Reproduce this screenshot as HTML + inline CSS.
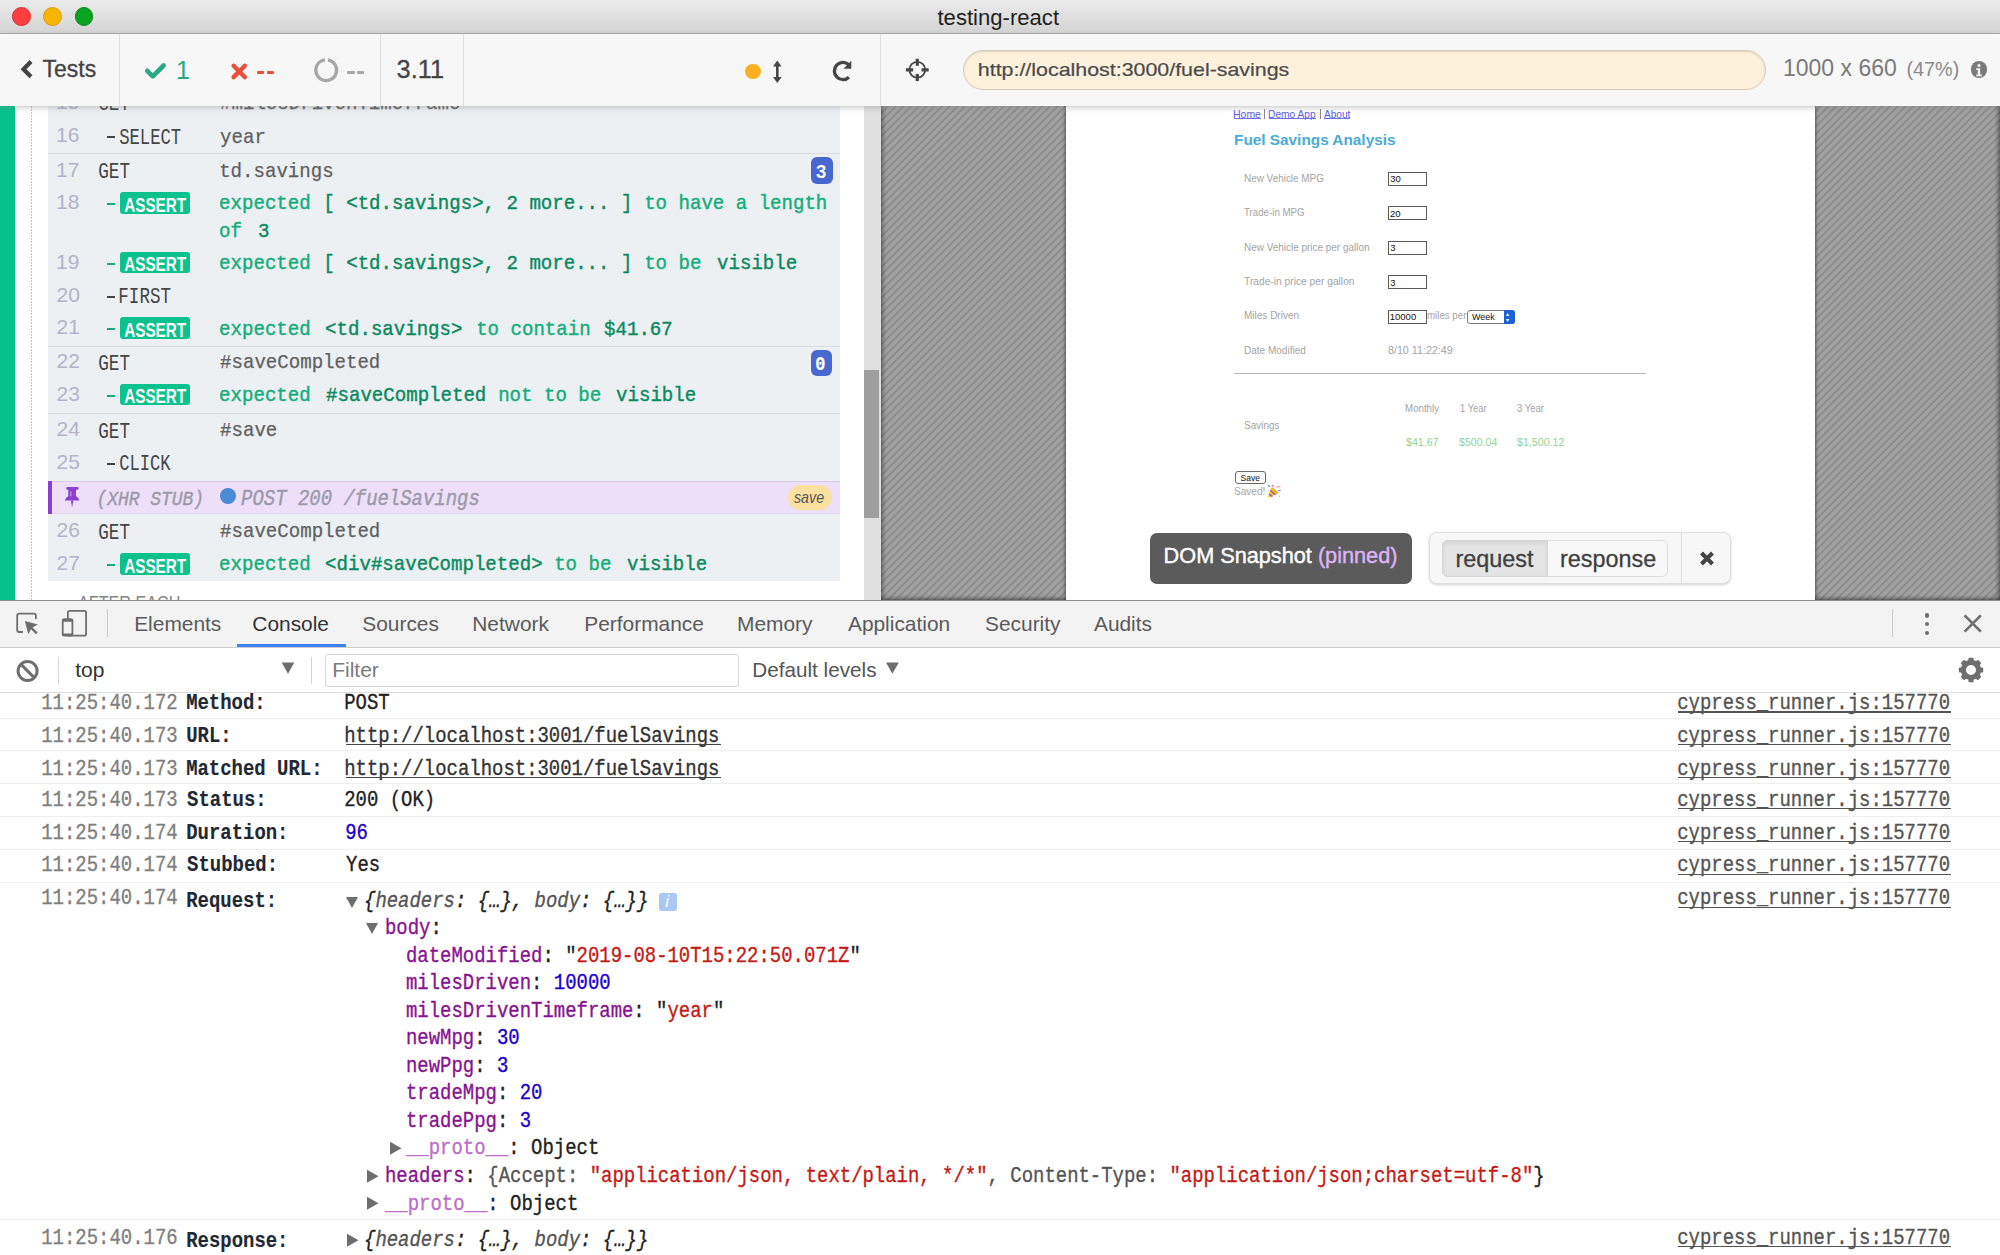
<!DOCTYPE html>
<html><head><meta charset="utf-8"><title>testing-react</title>
<style>
html,body{margin:0;padding:0;width:2000px;height:1255px;overflow:hidden;background:#fff}
.t{position:absolute;white-space:pre}
.r{position:absolute;box-sizing:border-box}
svg.r{overflow:visible}
</style></head><body>

<div class="r" style="left:0px;top:100px;width:881px;height:500px;background:#fff"></div>
<div class="r" style="left:0px;top:100px;width:15px;height:500px;background:#05c28b"></div>
<div class="r" style="left:31px;top:100px;width:1.2px;height:500px;background:repeating-linear-gradient(#c4c4c4 0px,#c4c4c4 2px,transparent 2px,transparent 3px)"></div>
<div class="r" style="left:48px;top:100px;width:792px;height:481px;background:#edf0f3"></div>
<div class="r" style="left:48px;top:153px;width:792px;height:1px;background:#d9dde2"></div>
<div class="r" style="left:48px;top:346px;width:792px;height:1px;background:#d9dde2"></div>
<div class="r" style="left:48px;top:413px;width:792px;height:1px;background:#d9dde2"></div>
<div class="r" style="left:48px;top:481px;width:792px;height:33px;background:#ecdff7;border-top:1px solid #d9cbe6;border-bottom:1px solid #e3d8ee"></div>
<div class="r" style="left:48px;top:481px;width:3.5px;height:33px;background:#8b3fd6"></div>
<div class="r" style="left:864px;top:106px;width:17px;height:494px;background:#e0e0e0"></div>
<div class="r" style="left:864px;top:370px;width:15px;height:148px;background:#9e9e9e"></div>
<div class="t" style="left:56.00px;top:89.80px;font:normal 400 21.00px/23px 'Liberation Sans',sans-serif;color:#b5b3c8;">15</div>
<div class="t" style="left:97.83px;top:92.20px;font:normal 400 21.20px/24px 'Liberation Mono',monospace;color:#454545;transform:scaleX(0.8343);transform-origin:1.17px 0;">GET</div>
<div class="t" style="left:219.96px;top:91.80px;font:normal 400 20.60px/23px 'Liberation Mono',monospace;color:#606060;transform:scaleX(0.9264);transform-origin:0.54px 0;-webkit-text-stroke:0.25px #606060">#milesDrivenTimeframe</div>
<div class="t" style="left:56.00px;top:123.00px;font:normal 400 21.00px/23px 'Liberation Sans',sans-serif;color:#b5b3c8;">16</div>
<div class="r" style="left:107.2px;top:136.4px;width:7.6px;height:2px;background:#454545"></div>
<div class="t" style="left:119.18px;top:125.60px;font:normal 400 21.20px/24px 'Liberation Mono',monospace;color:#454545;transform:scaleX(0.8124);transform-origin:0.82px 0;">SELECT</div>
<div class="t" style="left:219.84px;top:125.50px;font:normal 400 20.60px/23px 'Liberation Mono',monospace;color:#606060;transform:scaleX(0.9264);transform-origin:0.66px 0;-webkit-text-stroke:0.25px #606060">year</div>
<div class="t" style="left:56.00px;top:157.50px;font:normal 400 21.00px/23px 'Liberation Sans',sans-serif;color:#b5b3c8;">17</div>
<div class="t" style="left:97.83px;top:160.10px;font:normal 400 21.20px/24px 'Liberation Mono',monospace;color:#454545;transform:scaleX(0.8343);transform-origin:1.17px 0;">GET</div>
<div class="t" style="left:218.59px;top:159.50px;font:normal 400 20.60px/23px 'Liberation Mono',monospace;color:#606060;transform:scaleX(0.9264);transform-origin:1.91px 0;-webkit-text-stroke:0.25px #606060">td.savings</div>
<div class="r" style="left:810.8px;top:157.2px;width:21.8px;height:26.8px;background:#4867cf;border-radius:6px"></div>
<div class="t" style="left:816.08px;top:160.50px;font:normal 700 18.50px/21px 'Liberation Sans',sans-serif;color:#fff;">3</div>
<div class="t" style="left:56.00px;top:190.00px;font:normal 400 21.00px/23px 'Liberation Sans',sans-serif;color:#b5b3c8;">18</div>
<div class="r" style="left:107.2px;top:203.4px;width:7.6px;height:2px;background:#14ad7b"></div>
<div class="r" style="left:120px;top:192px;width:70px;height:21.7px;background:#0bc28d;border-radius:3px"></div>
<div class="t" style="left:123.99px;top:192.70px;font:normal 700 20.50px/23px 'Liberation Sans',sans-serif;color:#fff;transform:scaleX(0.7462);transform-origin:0.51px 0;">ASSERT</div>
<div class="t" style="left:219.16px;top:192.00px;font:normal 400 20.60px/23px 'Liberation Mono',monospace;color:#14ad7b;transform:scaleX(0.9264);transform-origin:1.34px 0;-webkit-text-stroke:0.42px #14ad7b">expected</div>
<div class="t" style="left:323.38px;top:192.00px;font:normal 400 20.60px/23px 'Liberation Mono',monospace;color:#0b8a60;transform:scaleX(0.9264);transform-origin:4.12px 0;-webkit-text-stroke:0.42px #0b8a60">[ &lt;td.savings&gt;, 2 more... ]</div>
<div class="t" style="left:644.39px;top:192.00px;font:normal 400 20.60px/23px 'Liberation Mono',monospace;color:#14ad7b;transform:scaleX(0.9264);transform-origin:1.91px 0;-webkit-text-stroke:0.42px #14ad7b">to have a length</div>
<div class="t" style="left:219.09px;top:219.50px;font:normal 400 20.60px/23px 'Liberation Mono',monospace;color:#14ad7b;transform:scaleX(0.9264);transform-origin:1.31px 0;-webkit-text-stroke:0.42px #14ad7b">of</div>
<div class="t" style="left:257.51px;top:219.50px;font:normal 400 20.60px/23px 'Liberation Mono',monospace;color:#0b8a60;transform:scaleX(0.9264);transform-origin:1.29px 0;-webkit-text-stroke:0.42px #0b8a60">3</div>
<div class="t" style="left:56.00px;top:249.70px;font:normal 400 21.00px/23px 'Liberation Sans',sans-serif;color:#b5b3c8;">19</div>
<div class="r" style="left:107.2px;top:263.09999999999997px;width:7.6px;height:2px;background:#14ad7b"></div>
<div class="r" style="left:120px;top:251.7px;width:70px;height:21.7px;background:#0bc28d;border-radius:3px"></div>
<div class="t" style="left:123.99px;top:252.40px;font:normal 700 20.50px/23px 'Liberation Sans',sans-serif;color:#fff;transform:scaleX(0.7462);transform-origin:0.51px 0;">ASSERT</div>
<div class="t" style="left:219.16px;top:251.70px;font:normal 400 20.60px/23px 'Liberation Mono',monospace;color:#14ad7b;transform:scaleX(0.9264);transform-origin:1.34px 0;-webkit-text-stroke:0.42px #14ad7b">expected</div>
<div class="t" style="left:323.38px;top:251.70px;font:normal 400 20.60px/23px 'Liberation Mono',monospace;color:#0b8a60;transform:scaleX(0.9264);transform-origin:4.12px 0;-webkit-text-stroke:0.42px #0b8a60">[ &lt;td.savings&gt;, 2 more... ]</div>
<div class="t" style="left:644.39px;top:251.70px;font:normal 400 20.60px/23px 'Liberation Mono',monospace;color:#14ad7b;transform:scaleX(0.9264);transform-origin:1.91px 0;-webkit-text-stroke:0.42px #14ad7b">to be</div>
<div class="t" style="left:717.01px;top:251.70px;font:normal 400 20.60px/23px 'Liberation Mono',monospace;color:#0b8a60;transform:scaleX(0.9264);transform-origin:0.69px 0;-webkit-text-stroke:0.42px #0b8a60">visible</div>
<div class="t" style="left:56.54px;top:282.70px;font:normal 400 21.00px/23px 'Liberation Sans',sans-serif;color:#b5b3c8;">20</div>
<div class="r" style="left:107.2px;top:296.09999999999997px;width:7.6px;height:2px;background:#454545"></div>
<div class="t" style="left:117.99px;top:285.30px;font:normal 400 21.20px/24px 'Liberation Mono',monospace;color:#454545;transform:scaleX(0.8272);transform-origin:2.01px 0;">FIRST</div>
<div class="t" style="left:56.54px;top:315.00px;font:normal 400 21.00px/23px 'Liberation Sans',sans-serif;color:#b5b3c8;">21</div>
<div class="r" style="left:107.2px;top:328.4px;width:7.6px;height:2px;background:#14ad7b"></div>
<div class="r" style="left:120px;top:317px;width:70px;height:21.7px;background:#0bc28d;border-radius:3px"></div>
<div class="t" style="left:123.99px;top:317.70px;font:normal 700 20.50px/23px 'Liberation Sans',sans-serif;color:#fff;transform:scaleX(0.7462);transform-origin:0.51px 0;">ASSERT</div>
<div class="t" style="left:219.16px;top:317.50px;font:normal 400 20.60px/23px 'Liberation Mono',monospace;color:#14ad7b;transform:scaleX(0.9264);transform-origin:1.34px 0;-webkit-text-stroke:0.42px #14ad7b">expected</div>
<div class="t" style="left:325.13px;top:317.50px;font:normal 400 20.60px/23px 'Liberation Mono',monospace;color:#0b8a60;transform:scaleX(0.9264);transform-origin:1.17px 0;-webkit-text-stroke:0.42px #0b8a60">&lt;td.savings&gt;</div>
<div class="t" style="left:475.59px;top:317.50px;font:normal 400 20.60px/23px 'Liberation Mono',monospace;color:#14ad7b;transform:scaleX(0.9264);transform-origin:1.91px 0;-webkit-text-stroke:0.42px #14ad7b">to contain</div>
<div class="t" style="left:604.34px;top:317.50px;font:normal 400 20.60px/23px 'Liberation Mono',monospace;color:#0b8a60;transform:scaleX(0.9264);transform-origin:0.66px 0;-webkit-text-stroke:0.42px #0b8a60">$41.67</div>
<div class="t" style="left:56.54px;top:349.40px;font:normal 400 21.00px/23px 'Liberation Sans',sans-serif;color:#b5b3c8;">22</div>
<div class="t" style="left:97.83px;top:352.00px;font:normal 400 21.20px/24px 'Liberation Mono',monospace;color:#454545;transform:scaleX(0.8343);transform-origin:1.17px 0;">GET</div>
<div class="t" style="left:219.96px;top:351.40px;font:normal 400 20.60px/23px 'Liberation Mono',monospace;color:#606060;transform:scaleX(0.9264);transform-origin:0.54px 0;-webkit-text-stroke:0.25px #606060">#saveCompleted</div>
<div class="r" style="left:810.8px;top:350px;width:21.7px;height:26.3px;background:#4867cf;border-radius:6px"></div>
<div class="t" style="left:814.90px;top:354.00px;font:normal 700 19.33px/22px 'Liberation Mono',monospace;color:#fff;transform:scaleX(0.8773);transform-origin:1.10px 0;-webkit-text-stroke-width:0.2px">0</div>
<div class="t" style="left:56.54px;top:381.70px;font:normal 400 21.00px/23px 'Liberation Sans',sans-serif;color:#b5b3c8;">23</div>
<div class="r" style="left:107.2px;top:395.09999999999997px;width:7.6px;height:2px;background:#14ad7b"></div>
<div class="r" style="left:120px;top:383.7px;width:70px;height:21.7px;background:#0bc28d;border-radius:3px"></div>
<div class="t" style="left:123.99px;top:384.40px;font:normal 700 20.50px/23px 'Liberation Sans',sans-serif;color:#fff;transform:scaleX(0.7462);transform-origin:0.51px 0;">ASSERT</div>
<div class="t" style="left:219.16px;top:384.00px;font:normal 400 20.60px/23px 'Liberation Mono',monospace;color:#14ad7b;transform:scaleX(0.9264);transform-origin:1.34px 0;-webkit-text-stroke:0.42px #14ad7b">expected</div>
<div class="t" style="left:325.76px;top:384.00px;font:normal 400 20.60px/23px 'Liberation Mono',monospace;color:#0b8a60;transform:scaleX(0.9264);transform-origin:0.54px 0;-webkit-text-stroke:0.42px #0b8a60">#saveCompleted</div>
<div class="t" style="left:498.20px;top:384.00px;font:normal 400 20.60px/23px 'Liberation Mono',monospace;color:#14ad7b;transform:scaleX(0.9264);transform-origin:1.80px 0;-webkit-text-stroke:0.42px #14ad7b">not to be</div>
<div class="t" style="left:615.61px;top:384.00px;font:normal 400 20.60px/23px 'Liberation Mono',monospace;color:#0b8a60;transform:scaleX(0.9264);transform-origin:0.69px 0;-webkit-text-stroke:0.42px #0b8a60">visible</div>
<div class="t" style="left:56.54px;top:417.00px;font:normal 400 21.00px/23px 'Liberation Sans',sans-serif;color:#b5b3c8;">24</div>
<div class="t" style="left:97.83px;top:419.60px;font:normal 400 21.20px/24px 'Liberation Mono',monospace;color:#454545;transform:scaleX(0.8343);transform-origin:1.17px 0;">GET</div>
<div class="t" style="left:219.96px;top:418.50px;font:normal 400 20.60px/23px 'Liberation Mono',monospace;color:#606060;transform:scaleX(0.9264);transform-origin:0.54px 0;-webkit-text-stroke:0.25px #606060">#save</div>
<div class="t" style="left:56.54px;top:449.60px;font:normal 400 21.00px/23px 'Liberation Sans',sans-serif;color:#b5b3c8;">25</div>
<div class="r" style="left:107.2px;top:463.0px;width:7.6px;height:2px;background:#454545"></div>
<div class="t" style="left:118.83px;top:452.20px;font:normal 400 21.20px/24px 'Liberation Mono',monospace;color:#454545;transform:scaleX(0.8090);transform-origin:1.17px 0;">CLICK</div>
<svg class="r" style="left:60px;top:484px;" width="24" height="26" viewBox="60 484 24 26"><path d="M67.6 487.1h9.7a1.3 1.3 0 0 1 0 2.6h-1.3v6.6c1.7 0.8 3 2.4 3.3 4.3h-14.3c0.3-1.9 1.6-3.5 3.3-4.3v-6.6h-0.7a1.3 1.3 0 0 1 0-2.6z" fill="#8b3fd2"/><path d="M70.9 500.4h2.4l-1.2 6.9z" fill="#8b3fd2"/><rect x="70.2" y="491.3" width="1.2" height="5" fill="#c6a0e8"/></svg>
<div class="t" style="left:96.23px;top:488.40px;font:italic 400 21.00px/23px 'Liberation Mono',monospace;color:#9b9aa8;transform:scaleX(0.8534);transform-origin:3.17px 0;-webkit-text-stroke:0.4px #9b9aa8">(XHR STUB)</div>
<div class="r" style="left:220px;top:487.9px;width:16px;height:16px;background:#4a8ad4;border-radius:50%"></div>
<div class="t" style="left:241.40px;top:487.00px;font:italic 400 21.60px/24px 'Liberation Mono',monospace;color:#9b9aa8;transform:scaleX(0.8773);transform-origin:0.60px 0;-webkit-text-stroke:0.4px #9b9aa8">POST 200 /fuelSavings</div>
<div class="r" style="left:787.5px;top:484.5px;width:44.5px;height:25.5px;background:#fae19f;border-radius:13px"></div>
<div class="t" style="left:794.46px;top:488.00px;font:italic 400 17.00px/19px 'Liberation Sans',sans-serif;color:#555;transform:scaleX(0.8372);transform-origin:0.04px 0;">save</div>
<div class="t" style="left:56.54px;top:518.20px;font:normal 400 21.00px/23px 'Liberation Sans',sans-serif;color:#b5b3c8;">26</div>
<div class="t" style="left:97.83px;top:520.80px;font:normal 400 21.20px/24px 'Liberation Mono',monospace;color:#454545;transform:scaleX(0.8343);transform-origin:1.17px 0;">GET</div>
<div class="t" style="left:219.96px;top:520.00px;font:normal 400 20.60px/23px 'Liberation Mono',monospace;color:#606060;transform:scaleX(0.9264);transform-origin:0.54px 0;-webkit-text-stroke:0.25px #606060">#saveCompleted</div>
<div class="t" style="left:56.54px;top:550.90px;font:normal 400 21.00px/23px 'Liberation Sans',sans-serif;color:#b5b3c8;">27</div>
<div class="r" style="left:107.2px;top:564.3px;width:7.6px;height:2px;background:#14ad7b"></div>
<div class="r" style="left:120px;top:552.9px;width:70px;height:21.7px;background:#0bc28d;border-radius:3px"></div>
<div class="t" style="left:123.99px;top:553.60px;font:normal 700 20.50px/23px 'Liberation Sans',sans-serif;color:#fff;transform:scaleX(0.7462);transform-origin:0.51px 0;">ASSERT</div>
<div class="t" style="left:219.16px;top:553.00px;font:normal 400 20.60px/23px 'Liberation Mono',monospace;color:#14ad7b;transform:scaleX(0.9264);transform-origin:1.34px 0;-webkit-text-stroke:0.42px #14ad7b">expected</div>
<div class="t" style="left:325.13px;top:553.00px;font:normal 400 20.60px/23px 'Liberation Mono',monospace;color:#0b8a60;transform:scaleX(0.9264);transform-origin:1.17px 0;-webkit-text-stroke:0.42px #0b8a60">&lt;div#saveCompleted&gt;</div>
<div class="t" style="left:554.39px;top:553.00px;font:normal 400 20.60px/23px 'Liberation Mono',monospace;color:#14ad7b;transform:scaleX(0.9264);transform-origin:1.91px 0;-webkit-text-stroke:0.42px #14ad7b">to be</div>
<div class="t" style="left:626.81px;top:553.00px;font:normal 400 20.60px/23px 'Liberation Mono',monospace;color:#0b8a60;transform:scaleX(0.9264);transform-origin:0.69px 0;-webkit-text-stroke:0.42px #0b8a60">visible</div>
<div class="t" style="left:77.96px;top:593.00px;font:normal 400 18.00px/20px 'Liberation Sans',sans-serif;color:#858585;transform:scaleX(0.8977);transform-origin:0.04px 0;">AFTER EACH</div>
<div class="r" style="left:881px;top:100px;width:1119px;height:500px;box-shadow:inset 3px 0 4px -1px rgba(0,0,0,.35),inset -3px 0 4px -1px rgba(0,0,0,.35),inset 0 -3px 4px -1px rgba(0,0,0,.3);background-color:#a1a1a1;background-image:repeating-linear-gradient(135deg,#a1a1a1 0px,#a1a1a1 2.6px,#898989 3.8px,#898989 4.2px,#a1a1a1 5.45px)"></div>
<div class="r" style="left:1066px;top:100px;width:749px;height:500px;background:#fff;box-shadow:0 0 3px 1px rgba(0,0,0,.45)"></div>
<div class="t" style="left:1233.36px;top:106.70px;font:normal 400 11.50px/14px 'Liberation Sans',sans-serif;color:#5b5be6;transform:scaleX(0.9069);transform-origin:0.94px 0;">Home</div>
<div class="r" style="left:1234.3px;top:118.3px;width:26.5px;height:0.8px;background:#7070ea"></div>
<div class="t" style="left:1268.26px;top:106.70px;font:normal 400 11.50px/14px 'Liberation Sans',sans-serif;color:#5b5be6;transform:scaleX(0.8846);transform-origin:0.94px 0;">Demo App</div>
<div class="r" style="left:1269.2px;top:118.3px;width:46.799999999999955px;height:0.8px;background:#7070ea"></div>
<div class="t" style="left:1324.18px;top:106.70px;font:normal 400 11.50px/14px 'Liberation Sans',sans-serif;color:#5b5be6;transform:scaleX(0.8782);transform-origin:0.02px 0;">About</div>
<div class="r" style="left:1324.2px;top:118.3px;width:26.299999999999955px;height:0.8px;background:#7070ea"></div>
<div class="r" style="left:1264.2px;top:109px;width:0.9px;height:10px;background:#888"></div>
<div class="r" style="left:1319.7px;top:109px;width:0.9px;height:10px;background:#888"></div>
<div class="t" style="left:1233.97px;top:131.20px;font:normal 700 15.40px/18px 'Liberation Sans',sans-serif;color:#4aabd7;transform:scaleX(0.9972);transform-origin:1.03px 0;">Fuel Savings Analysis</div>
<div class="t" style="left:1243.74px;top:172.00px;font:normal 400 10.50px/13px 'Liberation Sans',sans-serif;color:#a4a4a4;transform:scaleX(0.9432);transform-origin:0.86px 0;">New Vehicle MPG</div>
<div class="t" style="left:1244.36px;top:206.35px;font:normal 400 10.50px/13px 'Liberation Sans',sans-serif;color:#a4a4a4;transform:scaleX(0.9243);transform-origin:0.24px 0;">Trade-in MPG</div>
<div class="t" style="left:1243.74px;top:240.70px;font:normal 400 10.50px/13px 'Liberation Sans',sans-serif;color:#a4a4a4;transform:scaleX(0.9466);transform-origin:0.86px 0;">New Vehicle price per gallon</div>
<div class="t" style="left:1244.36px;top:275.05px;font:normal 400 10.50px/13px 'Liberation Sans',sans-serif;color:#a4a4a4;transform:scaleX(0.9744);transform-origin:0.24px 0;">Trade-in price per gallon</div>
<div class="t" style="left:1243.74px;top:309.40px;font:normal 400 10.50px/13px 'Liberation Sans',sans-serif;color:#a4a4a4;transform:scaleX(0.9517);transform-origin:0.86px 0;">Miles Driven</div>
<div class="t" style="left:1243.74px;top:343.75px;font:normal 400 10.50px/13px 'Liberation Sans',sans-serif;color:#a4a4a4;transform:scaleX(0.9534);transform-origin:0.86px 0;">Date Modified</div>
<div class="r" style="left:1388px;top:171.7px;width:39px;height:14.3px;background:#fff;border:1px solid #5a5a5a"></div>
<div class="t" style="left:1390.14px;top:173.20px;font:normal 400 9.50px/12px 'Liberation Sans',sans-serif;color:#111;">30</div>
<div class="r" style="left:1388px;top:206.14999999999998px;width:39px;height:14.3px;background:#fff;border:1px solid #5a5a5a"></div>
<div class="t" style="left:1390.02px;top:207.65px;font:normal 400 9.50px/12px 'Liberation Sans',sans-serif;color:#111;">20</div>
<div class="r" style="left:1388px;top:240.6px;width:39px;height:14.3px;background:#fff;border:1px solid #5a5a5a"></div>
<div class="t" style="left:1390.14px;top:242.10px;font:normal 400 9.50px/12px 'Liberation Sans',sans-serif;color:#111;">3</div>
<div class="r" style="left:1388px;top:275.05px;width:39px;height:14.3px;background:#fff;border:1px solid #5a5a5a"></div>
<div class="t" style="left:1390.14px;top:276.55px;font:normal 400 9.50px/12px 'Liberation Sans',sans-serif;color:#111;">3</div>
<div class="r" style="left:1388px;top:309.5px;width:39px;height:14.3px;background:#fff;border:1px solid #5a5a5a"></div>
<div class="t" style="left:1389.78px;top:311.00px;font:normal 400 9.50px/12px 'Liberation Sans',sans-serif;color:#111;">10000</div>
<div class="t" style="left:1426.80px;top:309.30px;font:normal 400 10.50px/13px 'Liberation Sans',sans-serif;color:#a4a4a4;transform:scaleX(0.9227);transform-origin:0.70px 0;">miles per</div>
<div class="r" style="left:1467px;top:310px;width:48.3px;height:13.8px;background:#fff;border:1px solid #7a7a7a;border-radius:3px"></div>
<div class="r" style="left:1503.8px;top:310px;width:11.5px;height:13.8px;background:#1c62d4;border-radius:0 3px 3px 0"></div>
<div class="t" style="left:1471.96px;top:312.00px;font:normal 400 9.00px/11px 'Liberation Sans',sans-serif;color:#111;">Week</div>
<div class="t" style="left:1506.40px;top:310.00px;font:normal 400 6.00px/8px 'Liberation Sans',sans-serif;color:#fff;">▴</div>
<div class="t" style="left:1506.40px;top:316.00px;font:normal 400 6.00px/8px 'Liberation Sans',sans-serif;color:#fff;">▾</div>
<div class="t" style="left:1387.84px;top:344.10px;font:normal 400 10.50px/13px 'Liberation Sans',sans-serif;color:#a4a4a4;transform:scaleX(1.0194);transform-origin:0.46px 0;">8/10 11:22:49</div>
<div class="r" style="left:1234.3px;top:372.8px;width:411.4px;height:1.2px;background:#b9b9b9"></div>
<div class="t" style="left:1405.04px;top:401.80px;font:normal 400 10.50px/13px 'Liberation Sans',sans-serif;color:#a4a4a4;transform:scaleX(0.9224);transform-origin:0.86px 0;">Monthly</div>
<div class="t" style="left:1459.50px;top:401.80px;font:normal 400 10.50px/13px 'Liberation Sans',sans-serif;color:#a4a4a4;transform:scaleX(0.8911);transform-origin:0.80px 0;">1 Year</div>
<div class="t" style="left:1516.60px;top:401.80px;font:normal 400 10.50px/13px 'Liberation Sans',sans-serif;color:#a4a4a4;transform:scaleX(0.9057);transform-origin:0.40px 0;">3 Year</div>
<div class="t" style="left:1244.12px;top:418.50px;font:normal 400 10.50px/13px 'Liberation Sans',sans-serif;color:#a4a4a4;transform:scaleX(0.9507);transform-origin:0.48px 0;">Savings</div>
<div class="t" style="left:1405.79px;top:435.50px;font:normal 400 10.50px/13px 'Liberation Sans',sans-serif;color:#93d393;transform:scaleX(1.0103);transform-origin:0.11px 0;">$41.67</div>
<div class="t" style="left:1459.19px;top:435.50px;font:normal 400 10.50px/13px 'Liberation Sans',sans-serif;color:#93d393;transform:scaleX(1.0097);transform-origin:0.11px 0;">$500.04</div>
<div class="t" style="left:1516.89px;top:435.50px;font:normal 400 10.50px/13px 'Liberation Sans',sans-serif;color:#93d393;transform:scaleX(1.0158);transform-origin:0.11px 0;">$1,500.12</div>
<div class="r" style="left:1235px;top:470.8px;width:30.5px;height:12.8px;background:#fff;border:1px solid #6a6a6a;border-radius:3px"></div>
<div class="t" style="left:1240.61px;top:472.50px;font:normal 400 8.50px/11px 'Liberation Sans',sans-serif;color:#111;">Save</div>
<div class="t" style="left:1234.12px;top:484.90px;font:normal 400 10.50px/13px 'Liberation Sans',sans-serif;color:#a4a4a4;transform:scaleX(0.9565);transform-origin:0.48px 0;">Saved!</div>
<svg class="r" style="left:1266px;top:483px;" width="17" height="16" viewBox="1266 483 17 16"><path d="M1267.8 497.6L1271.4 487.3L1278.7 493.3z" fill="#f4c20d"/><path d="M1270.2 490.2L1275.6 495.0M1268.9 493.9L1272.4 496.8" stroke="#a052d6" stroke-width="1.3"/><path d="M1272.2 487.6L1277.6 492.4" stroke="#f08a1c" stroke-width="1"/><path d="M1268.2 485.2l1.4 1.8" stroke="#5a86e0" stroke-width="1.2"/><path d="M1272.3 485l1 1.6" stroke="#e8557a" stroke-width="1.2"/><path d="M1276.5 487.5l1.2-1.2l1.3 1l1.5-1.6" fill="none" stroke="#e97a9c" stroke-width="1"/><path d="M1277.5 490.5h3.4" stroke="#86a8f2" stroke-width="1.1"/><circle cx="1279.6" cy="496.2" r=".7" fill="#f0a0c0"/></svg>
<div class="r" style="left:1150.2px;top:532.7px;width:261.6px;height:51px;background:#5b5b5b;border-radius:7px"></div>
<div class="t" style="left:1163.60px;top:543.50px;font:normal 400 21.7px/24px 'Liberation Sans',sans-serif;color:#fff;-webkit-text-stroke:0.4px #fff">DOM Snapshot <span style="color:#deb3f6;-webkit-text-stroke:0.4px #deb3f6">(pinned)</span></div>
<div class="r" style="left:1428.8px;top:531.5px;width:302.4px;height:52.8px;background:#f7f7f7;border:1px solid #dedede;border-radius:8px;box-shadow:0 1px 3px rgba(0,0,0,.18)"></div>
<div class="r" style="left:1442.4px;top:539.5px;width:225.6px;height:37.6px;background:#f8f8f8;border:1px solid #dcdcdc;border-radius:6px"></div>
<div class="r" style="left:1442.4px;top:539.5px;width:105.6px;height:37.6px;background:#e4e4e4;border:1px solid #d6d6d6;border-radius:6px 0 0 6px;box-shadow:inset 0 2px 4px rgba(0,0,0,.08)"></div>
<div class="t" style="left:1455.45px;top:545.70px;font:normal 400 23.40px/26px 'Liberation Sans',sans-serif;color:#3f3f3f;-webkit-text-stroke:0.3px #3f3f3f">request</div>
<div class="t" style="left:1560.05px;top:545.70px;font:normal 400 23.40px/26px 'Liberation Sans',sans-serif;color:#3f3f3f;-webkit-text-stroke:0.3px #3f3f3f">response</div>
<div class="r" style="left:1681px;top:531.5px;width:1.2px;height:52.8px;background:#dedede"></div>
<svg class="r" style="left:1697px;top:549px;" width="20" height="20" viewBox="1697 549 20 20"><path d="M1701.5 553l11 11M1712.5 553l-11 11" stroke="#444" stroke-width="4" stroke-linecap="butt"/></svg>
<div class="r" style="left:0px;top:0px;width:2000px;height:34px;background:linear-gradient(#ebebeb,#d4d4d4);border-bottom:1px solid #a9a9a9"></div>
<div class="r" style="left:12.1px;top:7.200000000000001px;width:18.8px;height:18.8px;background:#fd3f40;border-radius:50%;border:1px solid #e2292b"></div>
<div class="r" style="left:43.4px;top:7.200000000000001px;width:18.8px;height:18.8px;background:#f7b400;border-radius:50%;border:1px solid #e09e00"></div>
<div class="r" style="left:74.69999999999999px;top:7.200000000000001px;width:18.8px;height:18.8px;background:#0aa320;border-radius:50%;border:1px solid #058d17"></div>
<div class="t" style="left:937.47px;top:5.20px;font:normal 400 22.10px/25px 'Liberation Sans',sans-serif;color:#1e1e1e;">testing-react</div>
<div class="r" style="left:0px;top:34px;width:2000px;height:72px;background:#f7f7f7;box-shadow:0 2px 5px rgba(130,130,130,.4)"></div>
<div class="r" style="left:119px;top:34px;width:1.2px;height:72px;background:#dedede"></div>
<div class="r" style="left:380px;top:34px;width:1.2px;height:72px;background:#dedede"></div>
<div class="r" style="left:462.5px;top:34px;width:1.2px;height:72px;background:#dedede"></div>
<div class="r" style="left:880px;top:34px;width:1.2px;height:72px;background:#dedede"></div>
<svg class="r" style="left:18px;top:57px;" width="18" height="24" viewBox="18 57 18 24"><path d="M31 61.5L23.5 69.2L31 76.8" fill="none" stroke="#444" stroke-width="4.2" stroke-linecap="butt" stroke-linejoin="miter"/></svg>
<div class="t" style="left:42.48px;top:57.20px;font:normal 400 23.00px/25px 'Liberation Sans',sans-serif;color:#444;-webkit-text-stroke:0.3px #444">Tests</div>
<svg class="r" style="left:142px;top:60px;" width="28" height="22" viewBox="142 60 28 22"><path d="M147.3 70.8L152.8 76.3L163.6 65.5" fill="none" stroke="#2aa886" stroke-width="4.6" stroke-linecap="round" stroke-linejoin="round"/></svg>
<div class="t" style="left:176.10px;top:56.50px;font:normal 400 25.00px/27px 'Liberation Sans',sans-serif;color:#2aa886;">1</div>
<svg class="r" style="left:228px;top:60px;" width="24" height="24" viewBox="228 60 24 24"><path d="M233.6 65.8L244.9 77.1M244.9 65.8L233.6 77.1" stroke="#e8503b" stroke-width="4.4" stroke-linecap="round"/></svg>
<div class="r" style="left:257.2px;top:70.5px;width:7px;height:3.2px;background:#e8503b;border-radius:1px"></div>
<div class="r" style="left:267.4px;top:70.5px;width:7px;height:3.2px;background:#e8503b;border-radius:1px"></div>
<svg class="r" style="left:312px;top:56px;" width="28" height="28" viewBox="312 56 28 28"><circle cx="326.2" cy="70.2" r="10.4" fill="none" stroke="#a6a6a6" stroke-width="3.3" stroke-dasharray="61.8 3.6" transform="rotate(-80 326.2 70.2)"/></svg>
<div class="r" style="left:347px;top:70.5px;width:7.5px;height:3.2px;background:#a6a6a6;border-radius:1px"></div>
<div class="r" style="left:356.8px;top:70.5px;width:7.5px;height:3.2px;background:#a6a6a6;border-radius:1px"></div>
<div class="t" style="left:396.53px;top:55.30px;font:normal 400 25.40px/28px 'Liberation Sans',sans-serif;color:#454545;-webkit-text-stroke:0.3px #454545">3.11</div>
<div class="r" style="left:745.4px;top:63.9px;width:15.2px;height:15.2px;background:#fbb020;border-radius:50%"></div>
<svg class="r" style="left:770px;top:58px;" width="16" height="28" viewBox="770 58 16 28"><path d="M777.3 64v15" stroke="#464646" stroke-width="2.6"/><path d="M773 66.5L777.3 60.6L781.6 66.5z M773 77L777.3 83L781.6 77z" fill="#464646"/></svg>
<svg class="r" style="left:828px;top:58px;" width="28" height="26" viewBox="828 58 28 26"><path d="M848.6 64.5A8.6 8.6 0 1 0 848.9 77.2" fill="none" stroke="#464646" stroke-width="3.4"/><path d="M851.3 60.8V68.8H843.5z" fill="#464646"/></svg>
<svg class="r" style="left:903px;top:56px;" width="30" height="28" viewBox="903 56 30 28"><circle cx="917.3" cy="69.8" r="7.9" fill="none" stroke="#464646" stroke-width="1.8"/><path d="M917.3 58.7v7M917.3 74v7M905.9 69.8h7.2M921.5 69.8h7.2" stroke="#464646" stroke-width="3.2"/></svg>
<div class="r" style="left:963px;top:50.3px;width:803px;height:39.7px;background:#fdf1dc;border:1px solid #d7ccba;border-radius:20px;box-shadow:inset 0 1px 2px rgba(0,0,0,.12)"></div>
<div class="t" style="left:978.41px;top:58.50px;font:normal 400 18.60px/21px 'Liberation Sans',sans-serif;color:#4a4a4a;transform:scaleX(1.1501);transform-origin:1.29px 0;-webkit-text-stroke:0.2px #4a4a4a">http://localhost:3000/fuel-savings</div>
<div class="t" style="left:1782.95px;top:56.00px;font:normal 400 23.00px/25px 'Liberation Sans',sans-serif;color:#7a7a7a;">1000 x 660</div>
<div class="t" style="left:1906.47px;top:57.70px;font:normal 400 19.80px/22px 'Liberation Sans',sans-serif;color:#8a8a8a;">(47%)</div>
<div class="r" style="left:1970.7px;top:61.4px;width:16.5px;height:16.5px;background:#7a7a7a;border-radius:50%"></div>
<svg class="r" style="left:1970px;top:61px;" width="18" height="18" viewBox="1970 61 18 18"><circle cx="1979" cy="65.4" r="1.5" fill="#f7f7f7"/><path d="M1976.3 68.3h3.9v6.3h1.6v1.6h-5.5v-1.6h1.5v-4.7h-1.5z" fill="#f7f7f7"/></svg>
<div class="r" style="left:0px;top:600px;width:2000px;height:655px;background:#fff"></div>
<div class="r" style="left:0px;top:600px;width:2000px;height:48px;background:#f3f3f3;border-top:1px solid #8e8e8e;border-bottom:1px solid #cdcdcd"></div>
<svg class="r" style="left:14px;top:610px;" width="28" height="28" viewBox="14 610 28 28"><path d="M22.9 632H19.2a2 2 0 0 1-2-2V615.7a2 2 0 0 1 2-2H33.9a2 2 0 0 1 2 2V619" fill="none" stroke="#6e6e6e" stroke-width="1.8"/><path d="M24.9 621.1L37.9 624.5L32.6 627.6L37.6 632.6L36 634.2L31 629.2L28.3 634.2z" fill="#6e6e6e"/></svg>
<svg class="r" style="left:58px;top:608px;" width="32" height="32" viewBox="58 608 32 32"><rect x="67.9" y="610.8" width="18.2" height="24.9" rx="1.8" fill="none" stroke="#6e6e6e" stroke-width="1.8"/><rect x="62.7" y="619.2" width="9.7" height="16.5" rx="1.5" fill="#f3f3f3" stroke="#6e6e6e" stroke-width="1.8"/><path d="M62.5 620.5h10.2M62.5 634.7h10.2" stroke="#6e6e6e" stroke-width="2.6"/></svg>
<div class="r" style="left:107px;top:609.4px;width:1px;height:27.4px;background:#cbcbcb"></div>
<div class="t" style="left:134.19px;top:612.00px;font:normal 400 20.90px/23px 'Liberation Sans',sans-serif;color:#5a5a5a;">Elements</div>
<div class="t" style="left:252.34px;top:612.00px;font:normal 400 20.90px/23px 'Liberation Sans',sans-serif;color:#333;">Console</div>
<div class="t" style="left:362.25px;top:612.00px;font:normal 400 20.90px/23px 'Liberation Sans',sans-serif;color:#5a5a5a;">Sources</div>
<div class="t" style="left:472.29px;top:612.00px;font:normal 400 20.90px/23px 'Liberation Sans',sans-serif;color:#5a5a5a;">Network</div>
<div class="t" style="left:584.29px;top:612.00px;font:normal 400 20.90px/23px 'Liberation Sans',sans-serif;color:#5a5a5a;">Performance</div>
<div class="t" style="left:737.09px;top:612.00px;font:normal 400 20.90px/23px 'Liberation Sans',sans-serif;color:#5a5a5a;">Memory</div>
<div class="t" style="left:847.96px;top:612.00px;font:normal 400 20.90px/23px 'Liberation Sans',sans-serif;color:#5a5a5a;">Application</div>
<div class="t" style="left:985.05px;top:612.00px;font:normal 400 20.90px/23px 'Liberation Sans',sans-serif;color:#5a5a5a;">Security</div>
<div class="t" style="left:1093.96px;top:612.00px;font:normal 400 20.90px/23px 'Liberation Sans',sans-serif;color:#5a5a5a;">Audits</div>
<div class="r" style="left:236.7px;top:644px;width:109.8px;height:2.6px;background:#3b80f0"></div>
<div class="r" style="left:1892.3px;top:609px;width:1px;height:28px;background:#cbcbcb"></div>
<div class="r" style="left:1924.7px;top:613.3000000000001px;width:4.6px;height:4.6px;background:#6e6e6e;border-radius:50%"></div>
<div class="r" style="left:1924.7px;top:621.9000000000001px;width:4.6px;height:4.6px;background:#6e6e6e;border-radius:50%"></div>
<div class="r" style="left:1924.7px;top:630.5px;width:4.6px;height:4.6px;background:#6e6e6e;border-radius:50%"></div>
<svg class="r" style="left:1960px;top:611px;" width="26" height="26" viewBox="1960 611 26 26"><path d="M1964.6 615.4l16.2 16.2M1980.8 615.4l-16.2 16.2" stroke="#6e6e6e" stroke-width="2.7"/></svg>
<div class="r" style="left:0px;top:692px;width:2000px;height:1px;background:#dedede"></div>
<svg class="r" style="left:14px;top:657px;" width="28" height="28" viewBox="14 657 28 28"><circle cx="27.6" cy="671" r="9.5" fill="none" stroke="#6e6e6e" stroke-width="3"/><path d="M21 664.4l13.2 13.2" stroke="#6e6e6e" stroke-width="3"/></svg>
<div class="r" style="left:58.3px;top:656.6px;width:1px;height:27px;background:#d4d4d4"></div>
<div class="t" style="left:75.28px;top:658.20px;font:normal 400 21.00px/23px 'Liberation Sans',sans-serif;color:#333;">top</div>
<svg class="r" style="left:279px;top:660px;" width="18" height="16" viewBox="279 660 18 16"><path d="M281.7 662.5h12.6l-6.3 11.3z" fill="#6e6e6e"/></svg>
<div class="r" style="left:311.2px;top:656.6px;width:1px;height:27px;background:#d4d4d4"></div>
<div class="r" style="left:325.4px;top:653.5px;width:413.8px;height:33.3px;background:#fff;border:1px solid #d6d6d6;border-radius:3px"></div>
<div class="t" style="left:332.18px;top:658.40px;font:normal 400 21.00px/23px 'Liberation Sans',sans-serif;color:#7b7b7b;">Filter</div>
<div class="t" style="left:752.30px;top:658.20px;font:normal 400 20.70px/23px 'Liberation Sans',sans-serif;color:#555;">Default levels</div>
<svg class="r" style="left:884px;top:660px;" width="18" height="16" viewBox="884 660 18 16"><path d="M886 662.5h12.8l-6.4 11.3z" fill="#6e6e6e"/></svg>
<svg class="r" style="left:1955px;top:654px;" width="32" height="32" viewBox="1955 654 32 32"><rect x="1968.4" y="657.8" width="5.2" height="6" rx="1" transform="rotate(0 1971 670)" fill="#6e6e6e"/><rect x="1968.4" y="657.8" width="5.2" height="6" rx="1" transform="rotate(45 1971 670)" fill="#6e6e6e"/><rect x="1968.4" y="657.8" width="5.2" height="6" rx="1" transform="rotate(90 1971 670)" fill="#6e6e6e"/><rect x="1968.4" y="657.8" width="5.2" height="6" rx="1" transform="rotate(135 1971 670)" fill="#6e6e6e"/><rect x="1968.4" y="657.8" width="5.2" height="6" rx="1" transform="rotate(180 1971 670)" fill="#6e6e6e"/><rect x="1968.4" y="657.8" width="5.2" height="6" rx="1" transform="rotate(225 1971 670)" fill="#6e6e6e"/><rect x="1968.4" y="657.8" width="5.2" height="6" rx="1" transform="rotate(270 1971 670)" fill="#6e6e6e"/><rect x="1968.4" y="657.8" width="5.2" height="6" rx="1" transform="rotate(315 1971 670)" fill="#6e6e6e"/><circle cx="1971" cy="670" r="7.6" fill="none" stroke="#6e6e6e" stroke-width="5.2"/></svg>
<div class="r" style="left:0px;top:717.6px;width:2000px;height:1px;background:#efefef"></div>
<div class="r" style="left:0px;top:750.4px;width:2000px;height:1px;background:#efefef"></div>
<div class="r" style="left:0px;top:783.4px;width:2000px;height:1px;background:#efefef"></div>
<div class="r" style="left:0px;top:816.3px;width:2000px;height:1px;background:#efefef"></div>
<div class="r" style="left:0px;top:849px;width:2000px;height:1px;background:#efefef"></div>
<div class="r" style="left:0px;top:881.5px;width:2000px;height:1px;background:#efefef"></div>
<div class="r" style="left:0px;top:1219px;width:2000px;height:1px;background:#efefef"></div>
<div class="t" style="left:40.84px;top:691.10px;font:normal 400 21.60px/24px 'Liberation Mono',monospace;color:#7f7f7f;transform:scaleX(0.8773);transform-origin:1.56px 0;-webkit-text-stroke-width:0.35px;">11:25:40.172</div>
<div class="t" style="left:185.96px;top:691.10px;font:normal 700 21.60px/24px 'Liberation Mono',monospace;color:#1f2933;transform:scaleX(0.8773);transform-origin:1.04px 0;-webkit-text-stroke-width:0.15px;">Method:</div>
<div class="t" style="left:1677.13px;top:691.10px;font:normal 400 21.60px/24px 'Liberation Mono',monospace;color:#545454;transform:scaleX(0.8773);transform-origin:1.37px 0;-webkit-text-stroke-width:0.35px;">cypress_runner.js:157770</div>
<div class="r" style="left:1678px;top:711.3000000000001px;width:273px;height:1.3px;background:#545454"></div>
<div class="t" style="left:40.84px;top:723.80px;font:normal 400 21.60px/24px 'Liberation Mono',monospace;color:#7f7f7f;transform:scaleX(0.8773);transform-origin:1.56px 0;-webkit-text-stroke-width:0.35px;">11:25:40.173</div>
<div class="t" style="left:185.64px;top:723.80px;font:normal 700 21.60px/24px 'Liberation Mono',monospace;color:#1f2933;transform:scaleX(0.8773);transform-origin:1.36px 0;-webkit-text-stroke-width:0.15px;">URL:</div>
<div class="t" style="left:1677.13px;top:723.80px;font:normal 400 21.60px/24px 'Liberation Mono',monospace;color:#545454;transform:scaleX(0.8773);transform-origin:1.37px 0;-webkit-text-stroke-width:0.35px;">cypress_runner.js:157770</div>
<div class="r" style="left:1678px;top:744.0px;width:273px;height:1.3px;background:#545454"></div>
<div class="t" style="left:40.84px;top:756.50px;font:normal 400 21.60px/24px 'Liberation Mono',monospace;color:#7f7f7f;transform:scaleX(0.8773);transform-origin:1.56px 0;-webkit-text-stroke-width:0.35px;">11:25:40.173</div>
<div class="t" style="left:185.96px;top:756.50px;font:normal 700 21.60px/24px 'Liberation Mono',monospace;color:#1f2933;transform:scaleX(0.8773);transform-origin:1.04px 0;-webkit-text-stroke-width:0.15px;">Matched URL:</div>
<div class="t" style="left:1677.13px;top:756.50px;font:normal 400 21.60px/24px 'Liberation Mono',monospace;color:#545454;transform:scaleX(0.8773);transform-origin:1.37px 0;-webkit-text-stroke-width:0.35px;">cypress_runner.js:157770</div>
<div class="r" style="left:1678px;top:776.7px;width:273px;height:1.3px;background:#545454"></div>
<div class="t" style="left:40.84px;top:787.50px;font:normal 400 21.60px/24px 'Liberation Mono',monospace;color:#7f7f7f;transform:scaleX(0.8773);transform-origin:1.56px 0;-webkit-text-stroke-width:0.35px;">11:25:40.173</div>
<div class="t" style="left:186.60px;top:787.50px;font:normal 700 21.60px/24px 'Liberation Mono',monospace;color:#1f2933;transform:scaleX(0.8773);transform-origin:0.40px 0;-webkit-text-stroke-width:0.15px;">Status:</div>
<div class="t" style="left:1677.13px;top:787.50px;font:normal 400 21.60px/24px 'Liberation Mono',monospace;color:#545454;transform:scaleX(0.8773);transform-origin:1.37px 0;-webkit-text-stroke-width:0.35px;">cypress_runner.js:157770</div>
<div class="r" style="left:1678px;top:807.7px;width:273px;height:1.3px;background:#545454"></div>
<div class="t" style="left:40.84px;top:820.50px;font:normal 400 21.60px/24px 'Liberation Mono',monospace;color:#7f7f7f;transform:scaleX(0.8773);transform-origin:1.56px 0;-webkit-text-stroke-width:0.35px;">11:25:40.174</div>
<div class="t" style="left:185.58px;top:820.50px;font:normal 700 21.60px/24px 'Liberation Mono',monospace;color:#1f2933;transform:scaleX(0.8773);transform-origin:1.42px 0;-webkit-text-stroke-width:0.15px;">Duration:</div>
<div class="t" style="left:1677.13px;top:820.50px;font:normal 400 21.60px/24px 'Liberation Mono',monospace;color:#545454;transform:scaleX(0.8773);transform-origin:1.37px 0;-webkit-text-stroke-width:0.35px;">cypress_runner.js:157770</div>
<div class="r" style="left:1678px;top:840.7px;width:273px;height:1.3px;background:#545454"></div>
<div class="t" style="left:40.84px;top:853.40px;font:normal 400 21.60px/24px 'Liberation Mono',monospace;color:#7f7f7f;transform:scaleX(0.8773);transform-origin:1.56px 0;-webkit-text-stroke-width:0.35px;">11:25:40.174</div>
<div class="t" style="left:186.60px;top:853.40px;font:normal 700 21.60px/24px 'Liberation Mono',monospace;color:#1f2933;transform:scaleX(0.8773);transform-origin:0.40px 0;-webkit-text-stroke-width:0.15px;">Stubbed:</div>
<div class="t" style="left:1677.13px;top:853.40px;font:normal 400 21.60px/24px 'Liberation Mono',monospace;color:#545454;transform:scaleX(0.8773);transform-origin:1.37px 0;-webkit-text-stroke-width:0.35px;">cypress_runner.js:157770</div>
<div class="r" style="left:1678px;top:873.6px;width:273px;height:1.3px;background:#545454"></div>
<div class="t" style="left:40.84px;top:886.40px;font:normal 400 21.60px/24px 'Liberation Mono',monospace;color:#7f7f7f;transform:scaleX(0.8773);transform-origin:1.56px 0;-webkit-text-stroke-width:0.35px;">11:25:40.174</div>
<div class="t" style="left:185.56px;top:889.00px;font:normal 700 21.60px/24px 'Liberation Mono',monospace;color:#1f2933;transform:scaleX(0.8773);transform-origin:1.44px 0;-webkit-text-stroke-width:0.15px;">Request:</div>
<div class="t" style="left:1677.13px;top:886.40px;font:normal 400 21.60px/24px 'Liberation Mono',monospace;color:#545454;transform:scaleX(0.8773);transform-origin:1.37px 0;-webkit-text-stroke-width:0.35px;">cypress_runner.js:157770</div>
<div class="r" style="left:1678px;top:906.6px;width:273px;height:1.3px;background:#545454"></div>
<div class="t" style="left:40.84px;top:1225.80px;font:normal 400 21.60px/24px 'Liberation Mono',monospace;color:#7f7f7f;transform:scaleX(0.8773);transform-origin:1.56px 0;-webkit-text-stroke-width:0.35px;">11:25:40.176</div>
<div class="t" style="left:185.56px;top:1228.50px;font:normal 700 21.60px/24px 'Liberation Mono',monospace;color:#1f2933;transform:scaleX(0.8773);transform-origin:1.44px 0;-webkit-text-stroke-width:0.15px;">Response:</div>
<div class="t" style="left:1677.13px;top:1225.80px;font:normal 400 21.60px/24px 'Liberation Mono',monospace;color:#545454;transform:scaleX(0.8773);transform-origin:1.37px 0;-webkit-text-stroke-width:0.35px;">cypress_runner.js:157770</div>
<div class="r" style="left:1678px;top:1246.0px;width:273px;height:1.3px;background:#545454"></div>
<div class="t" style="left:344.29px;top:691.10px;font:normal 400 21.60px/24px 'Liberation Mono',monospace;color:#222;transform:scaleX(0.8773);transform-origin:1.71px 0;-webkit-text-stroke-width:0.35px;">POST</div>
<div class="t" style="left:344.05px;top:723.80px;font:normal 400 21.60px/24px 'Liberation Mono',monospace;color:#333;transform:scaleX(0.8773);transform-origin:1.95px 0;-webkit-text-stroke-width:0.35px;">http://localhost:3001/fuelSavings</div>
<div class="r" style="left:346px;top:744.0px;width:375px;height:1.3px;background:#444"></div>
<div class="t" style="left:344.05px;top:756.50px;font:normal 400 21.60px/24px 'Liberation Mono',monospace;color:#333;transform:scaleX(0.8773);transform-origin:1.95px 0;-webkit-text-stroke-width:0.35px;">http://localhost:3001/fuelSavings</div>
<div class="r" style="left:346px;top:776.7px;width:375px;height:1.3px;background:#444"></div>
<div class="t" style="left:344.48px;top:787.50px;font:normal 400 21.60px/24px 'Liberation Mono',monospace;color:#222;transform:scaleX(0.8773);transform-origin:1.52px 0;-webkit-text-stroke-width:0.35px;">200 (OK)</div>
<div class="t" style="left:344.51px;top:820.50px;font:normal 400 21.60px/24px 'Liberation Mono',monospace;color:#1c00cf;transform:scaleX(0.8773);transform-origin:1.49px 0;-webkit-text-stroke-width:0.35px;">96</div>
<div class="t" style="left:345.62px;top:853.40px;font:normal 400 21.60px/24px 'Liberation Mono',monospace;color:#222;transform:scaleX(0.8773);transform-origin:0.38px 0;-webkit-text-stroke-width:0.35px;">Yes</div>
<svg class="r" style="left:344.8px;top:895.8px;" width="14" height="14" viewBox="344.8 895.8 14 14"><path d="M345.8 896.8h12l-6 11z" fill="#6e6e6e"/></svg>
<div class="t" style="left:364.30px;top:889.50px;font:normal 400 21.60px/23px 'Liberation Mono',monospace;transform:scaleX(0.8773);transform-origin:0 0;-webkit-text-stroke-width:0.35px"><span style="font-style:italic;font-weight:400;color:#222">{</span><span style="font-style:italic;font-weight:400;color:#555">headers</span><span style="font-style:italic;font-weight:400;color:#222">: {…}, </span><span style="font-style:italic;font-weight:400;color:#555">body</span><span style="font-style:italic;font-weight:400;color:#222">: {…}}</span></div>
<div class="r" style="left:659px;top:892.5px;width:18.3px;height:18px;background:#a9c8f5;border-radius:3px"></div>
<div class="t" style="left:665.23px;top:892.00px;font:italic 400 17.00px/19px 'Liberation Sans',sans-serif;color:#fff;">i</div>
<svg class="r" style="left:365px;top:921.55px;" width="14" height="14" viewBox="365 921.55 14 14"><path d="M366 922.55h12l-6 11z" fill="#6e6e6e"/></svg>
<div class="t" style="left:384.60px;top:917.05px;font:normal 400 21.60px/23px 'Liberation Mono',monospace;transform:scaleX(0.8773);transform-origin:0 0;-webkit-text-stroke-width:0.35px"><span style="font-style:normal;font-weight:400;color:#881391">body</span><span style="font-style:normal;font-weight:400;color:#222">:</span></div>
<div class="t" style="left:405.60px;top:944.60px;font:normal 400 21.60px/23px 'Liberation Mono',monospace;transform:scaleX(0.8773);transform-origin:0 0;-webkit-text-stroke-width:0.35px"><span style="font-style:normal;font-weight:400;color:#881391">dateModified</span><span style="font-style:normal;font-weight:400;color:#222">: </span><span style="font-style:normal;font-weight:400;color:#222">&quot;</span><span style="font-style:normal;font-weight:400;color:#c41a16">2019-08-10T15:22:50.071Z</span><span style="font-style:normal;font-weight:400;color:#222">&quot;</span></div>
<div class="t" style="left:405.60px;top:972.15px;font:normal 400 21.60px/23px 'Liberation Mono',monospace;transform:scaleX(0.8773);transform-origin:0 0;-webkit-text-stroke-width:0.35px"><span style="font-style:normal;font-weight:400;color:#881391">milesDriven</span><span style="font-style:normal;font-weight:400;color:#222">: </span><span style="font-style:normal;font-weight:400;color:#1c00cf">10000</span></div>
<div class="t" style="left:405.60px;top:999.70px;font:normal 400 21.60px/23px 'Liberation Mono',monospace;transform:scaleX(0.8773);transform-origin:0 0;-webkit-text-stroke-width:0.35px"><span style="font-style:normal;font-weight:400;color:#881391">milesDrivenTimeframe</span><span style="font-style:normal;font-weight:400;color:#222">: </span><span style="font-style:normal;font-weight:400;color:#222">&quot;</span><span style="font-style:normal;font-weight:400;color:#c41a16">year</span><span style="font-style:normal;font-weight:400;color:#222">&quot;</span></div>
<div class="t" style="left:405.60px;top:1027.25px;font:normal 400 21.60px/23px 'Liberation Mono',monospace;transform:scaleX(0.8773);transform-origin:0 0;-webkit-text-stroke-width:0.35px"><span style="font-style:normal;font-weight:400;color:#881391">newMpg</span><span style="font-style:normal;font-weight:400;color:#222">: </span><span style="font-style:normal;font-weight:400;color:#1c00cf">30</span></div>
<div class="t" style="left:405.60px;top:1054.80px;font:normal 400 21.60px/23px 'Liberation Mono',monospace;transform:scaleX(0.8773);transform-origin:0 0;-webkit-text-stroke-width:0.35px"><span style="font-style:normal;font-weight:400;color:#881391">newPpg</span><span style="font-style:normal;font-weight:400;color:#222">: </span><span style="font-style:normal;font-weight:400;color:#1c00cf">3</span></div>
<div class="t" style="left:405.60px;top:1082.35px;font:normal 400 21.60px/23px 'Liberation Mono',monospace;transform:scaleX(0.8773);transform-origin:0 0;-webkit-text-stroke-width:0.35px"><span style="font-style:normal;font-weight:400;color:#881391">tradeMpg</span><span style="font-style:normal;font-weight:400;color:#222">: </span><span style="font-style:normal;font-weight:400;color:#1c00cf">20</span></div>
<div class="t" style="left:405.60px;top:1109.90px;font:normal 400 21.60px/23px 'Liberation Mono',monospace;transform:scaleX(0.8773);transform-origin:0 0;-webkit-text-stroke-width:0.35px"><span style="font-style:normal;font-weight:400;color:#881391">tradePpg</span><span style="font-style:normal;font-weight:400;color:#222">: </span><span style="font-style:normal;font-weight:400;color:#1c00cf">3</span></div>
<svg class="r" style="left:388.5px;top:1140.95px;" width="14" height="16" viewBox="388.5 1140.95 14 16"><path d="M389.5 1141.65v13l11.5-6.5z" fill="#6e6e6e"/></svg>
<div class="t" style="left:405.60px;top:1137.45px;font:normal 400 21.60px/23px 'Liberation Mono',monospace;transform:scaleX(0.8773);transform-origin:0 0;-webkit-text-stroke-width:0.35px"><span style="font-style:normal;font-weight:400;color:#b871c4">__proto__</span><span style="font-style:normal;font-weight:400;color:#222">: </span><span style="font-style:normal;font-weight:400;color:#222">Object</span></div>
<svg class="r" style="left:366px;top:1168.5px;" width="14" height="16" viewBox="366 1168.5 14 16"><path d="M367 1169.2v13l11.5-6.5z" fill="#6e6e6e"/></svg>
<div class="t" style="left:384.60px;top:1165.00px;font:normal 400 21.60px/23px 'Liberation Mono',monospace;transform:scaleX(0.8773);transform-origin:0 0;-webkit-text-stroke-width:0.35px"><span style="font-style:normal;font-weight:400;color:#881391">headers</span><span style="font-style:normal;font-weight:400;color:#222">: </span><span style="font-style:normal;font-weight:400;color:#555">{Accept: </span><span style="font-style:normal;font-weight:400;color:#c41a16">&quot;application/json, text/plain, */*&quot;</span><span style="font-style:normal;font-weight:400;color:#555">, Content-Type: </span><span style="font-style:normal;font-weight:400;color:#c41a16">&quot;application/json;charset=utf-8&quot;</span><span style="font-style:normal;font-weight:400;color:#222">}</span></div>
<svg class="r" style="left:366px;top:1196.05px;" width="14" height="16" viewBox="366 1196.05 14 16"><path d="M367 1196.75v13l11.5-6.5z" fill="#6e6e6e"/></svg>
<div class="t" style="left:384.60px;top:1192.55px;font:normal 400 21.60px/23px 'Liberation Mono',monospace;transform:scaleX(0.8773);transform-origin:0 0;-webkit-text-stroke-width:0.35px"><span style="font-style:normal;font-weight:400;color:#b871c4">__proto__</span><span style="font-style:normal;font-weight:400;color:#222">: </span><span style="font-style:normal;font-weight:400;color:#222">Object</span></div>
<svg class="r" style="left:346px;top:1232.5px;" width="14" height="16" viewBox="346 1232.5 14 16"><path d="M347 1233.2v13l11.5-6.5z" fill="#6e6e6e"/></svg>
<div class="t" style="left:364.30px;top:1229.00px;font:normal 400 21.60px/23px 'Liberation Mono',monospace;transform:scaleX(0.8773);transform-origin:0 0;-webkit-text-stroke-width:0.35px"><span style="font-style:italic;font-weight:400;color:#222">{</span><span style="font-style:italic;font-weight:400;color:#555">headers</span><span style="font-style:italic;font-weight:400;color:#222">: {…}, </span><span style="font-style:italic;font-weight:400;color:#555">body</span><span style="font-style:italic;font-weight:400;color:#222">: {…}}</span></div>
</body></html>
